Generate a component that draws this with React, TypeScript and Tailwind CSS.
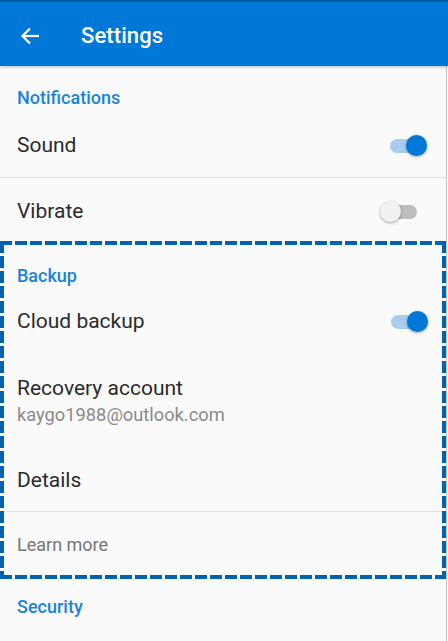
import React from "react";

function Toggle({ on }: { on: boolean }) {
  return (
    <div className="relative w-[40px] h-[24px] flex items-center justify-center">
      <div className={"w-[34px] h-[14px] rounded-full " + (on ? "bg-[#a9cdf0]" : "bg-[#bdbdbd]")} />
      <div
        className={
          "absolute top-[1px] w-[21px] h-[21px] rounded-full shadow-[0_1px_3px_rgba(0,0,0,0.35)] " +
          (on ? "right-0 bg-[#0078d7]" : "left-0 bg-[#f1f1f1]")
        }
      />
    </div>
  );
}

function DashedFrame() {
  return (
    <>
      <div className="absolute left-0 right-0 top-0 h-[4px] bg-[repeating-linear-gradient(90deg,#0063b1_0px,#0063b1_12px,transparent_12px,transparent_15px)]" />
      <div className="absolute left-0 right-0 bottom-0 h-[4px] bg-[repeating-linear-gradient(90deg,#0063b1_0px,#0063b1_12px,transparent_12px,transparent_15px)]" />
      <div className="absolute left-0 top-0 bottom-0 w-[4px] bg-[repeating-linear-gradient(180deg,#0063b1_0px,#0063b1_12px,transparent_12px,transparent_15px)]" />
      <div className="absolute right-0 top-0 bottom-0 w-[4px] bg-[repeating-linear-gradient(180deg,#0063b1_0px,#0063b1_12px,transparent_12px,transparent_15px)]" />
    </>
  );
}

export default function App() {
  return (
    <div className="w-[448px] h-[641px] overflow-hidden bg-[#fafafa] font-['Roboto',_'Noto_Sans',_sans-serif] relative">
      <div className="relative z-10 h-[66px] pt-[4px] bg-[#0078d7] flex items-center shadow-[0_1px_3px_rgba(0,0,0,0.25)] border-t-[2px] border-[#005a9e]">
        <div className="w-[60px] pl-[20px] flex items-center">
          <svg width="20" height="18" viewBox="0 0 20 18" fill="none" stroke="white" strokeWidth="2.2" strokeLinecap="butt" strokeLinejoin="miter">
            <path d="M19 9H3" />
            <path d="M10 1.5L2.5 9L10 16.5" />
          </svg>
        </div>
        <div className="ml-[21px] text-white text-[22px] font-medium leading-none tracking-[0.1px]">Settings</div>
      </div>

      <div className="w-[447px] border-r border-[#c4c4c4] h-[575px]">
        <div className="h-[46px] pt-[21px] pl-[17px] text-[18px] leading-[22px] font-medium text-[#1a84d8]">Notifications</div>
        <div className="h-[65px] pt-[2px] flex items-center justify-between pl-[17px] pr-[19px]">
          <span className="text-[21px] text-[#2b2b2b]">Sound</span>
          <Toggle on />
        </div>
        <div className="h-px bg-[#e2e2e2]" />
        <div className="h-[63px] pt-[4px] flex items-center justify-between pl-[17px] pr-[26px]">
          <span className="text-[21px] text-[#2b2b2b]">Vibrate</span>
          <Toggle on={false} />
        </div>

        <div className="relative w-[446px] h-[338px]">
          <DashedFrame />
          <div className="h-[56px] pt-[24px] pl-[17px] text-[18px] leading-[22px] font-medium text-[#1a84d8]">Backup</div>
          <div className="h-[48px] pt-[2px] flex items-center justify-between pl-[17px] pr-[18px]">
            <span className="text-[21px] text-[#2b2b2b]">Cloud backup</span>
            <Toggle on />
          </div>
          <div className="h-[102px] pt-[30px] pl-[17px]">
            <div className="text-[21px] leading-[26px] text-[#2b2b2b]">Recovery account</div>
            <div className="text-[18.3px] leading-[24px] pt-[2px] text-[#8a8a8a]">kaygo1988@outlook.com</div>
          </div>
          <div className="h-[64px] pt-[3px] flex items-center pl-[17px]">
            <span className="text-[21px] text-[#2b2b2b]">Details</span>
          </div>
          <div className="h-px bg-[#e2e2e2] mx-[4px]" />
          <div className="h-[64px] flex items-center pl-[17px]">
            <span className="text-[18px] text-[#757575]">Learn more</span>
          </div>
        </div>

        <div className="pt-[17px] pl-[17px] text-[18px] leading-[22px] font-medium text-[#1a84d8]">Security</div>
      </div>
    </div>
  );
}
